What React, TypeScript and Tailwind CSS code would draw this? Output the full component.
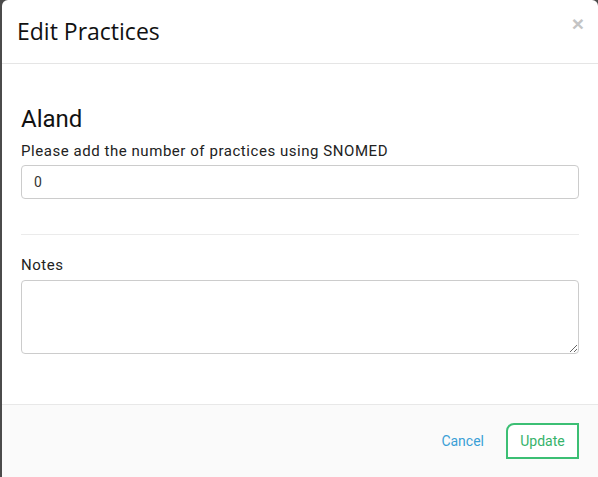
export default function App() {
  return (
    <div className="h-[477px] w-[598px] overflow-hidden bg-[#4b4b4b] pl-[2px]">
      <div className="flex h-full flex-col rounded-t-[6px] bg-white">
        <header className="relative flex h-[64px] items-center border-b border-[#e5e5e5] pl-[15px]">
          <h2 className="font-['Open_Sans',sans-serif] text-[23px] text-[#111]">Edit Practices</h2>
          <span className="absolute right-[14px] top-[13px] font-['Liberation_Sans',sans-serif] text-[21px] font-bold leading-none text-[#c4c4c4]">
            ×
          </span>
        </header>

        <main className="flex-1 px-[19px] pt-[39px] font-['Roboto',sans-serif]">
          <h3 className="text-[24px] leading-[32px] text-[#111]">Aland</h3>
          <label className="mt-[6px] block text-[15px] leading-[20px] tracking-[0.55px] text-[#222]">
            Please add the number of practices using SNOMED
          </label>
          <input
            readOnly
            value="0"
            className="mt-[4px] block h-[34px] w-full rounded-[4px] border border-[#ccc] px-[12px] text-[14px] text-[#333] outline-none"
          />
          <hr className="mt-[35px] border-[#ebebeb]" />
          <label className="mt-[20px] block text-[15px] leading-[20px] tracking-[0.55px] text-[#222]">Notes</label>
          <textarea
            readOnly
            className="mt-[5px] block h-[74px] w-full rounded-[4px] border border-[#ccc] px-[12px] py-[6px] text-[14px] outline-none"
          />
        </main>

        <footer className="flex h-[73px] items-center justify-end gap-[22px] border-t border-[#e8e8e8] bg-[#fafafa] pr-[19px] font-['Roboto',sans-serif] text-[14px]">
          <button className="pt-[1px] text-[#3a9fd6]">Cancel</button>
          <button className="h-[36px] w-[73px] rounded-tl-[8px] border-2 border-[#3cbf74] bg-white text-[#36b36a]">
            Update
          </button>
        </footer>
      </div>
    </div>
  );
}
